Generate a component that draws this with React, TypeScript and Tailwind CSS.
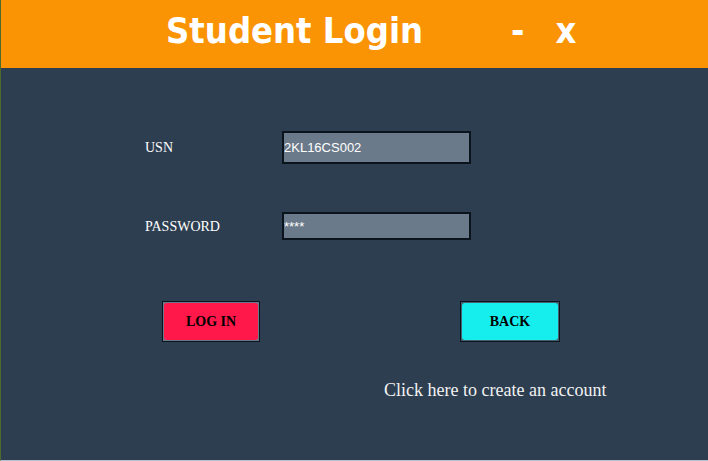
export default function App() {
  return (
    <div className="w-[708px] h-[461px] flex flex-col bg-[#2d3e50] border-l border-l-[#4d6b2e] border-b border-b-[#b8c0d0] overflow-hidden">
      {/* Title bar */}
      <div className="h-[68px] shrink-0 bg-[#fb9405] flex items-center pb-[6px] text-white font-bold font-['DejaVu_Sans_Condensed','DejaVu_Sans',sans-serif]">
        <span className="ml-[165px] text-[36px] leading-none">Student Login</span>
        <span className="ml-[88px] text-[36px] leading-none">-</span>
        <span className="ml-[31px] text-[36px] leading-none">x</span>
      </div>

      {/* Form */}
      <div className="flex flex-col pt-[63px] font-['Liberation_Serif',serif] text-white">
        <div className="flex items-center h-[33px]">
          <label className="ml-[144px] w-[137px] text-[14px]">USN</label>
          <input
            readOnly
            value="2KL16CS002"
            className="w-[189px] h-[33px] bg-[#6b7a8a] border-2 border-[#0b141d] text-white text-[13px] font-['Liberation_Sans',sans-serif] px-0 outline-none"
          />
        </div>
        <div className="flex items-center h-[28px] mt-[48px]">
          <label className="ml-[144px] w-[137px] text-[14px]">PASSWORD</label>
          <input
            readOnly
            value="****"
            className="w-[189px] h-[28px] bg-[#6b7a8a] border-2 border-[#0b141d] text-white text-[13px] font-['Liberation_Sans',sans-serif] px-0 outline-none"
          />
        </div>

        <div className="flex mt-[61px]">
          <button className="ml-[161px] w-[98px] h-[41px] border border-[#0b141d] p-[1px] bg-[#6b7a8a]">
            <span className="flex w-full h-full items-center justify-center rounded-[3px] bg-[#ff1849] text-black font-bold text-[14px]">
              LOG IN
            </span>
          </button>
          <button className="ml-[200px] w-[100px] h-[41px] border border-[#0b141d] p-[1px] bg-[#48606e]">
            <span className="flex w-full h-full items-center justify-center rounded-[3px] bg-[#16eeee] text-black font-bold text-[14px]">
              BACK
            </span>
          </button>
        </div>

        <div className="mt-[39px] ml-[383px] text-[18px] text-[#f2f2f2] leading-none">
          Click here to create an account
        </div>
      </div>
    </div>
  );
}
